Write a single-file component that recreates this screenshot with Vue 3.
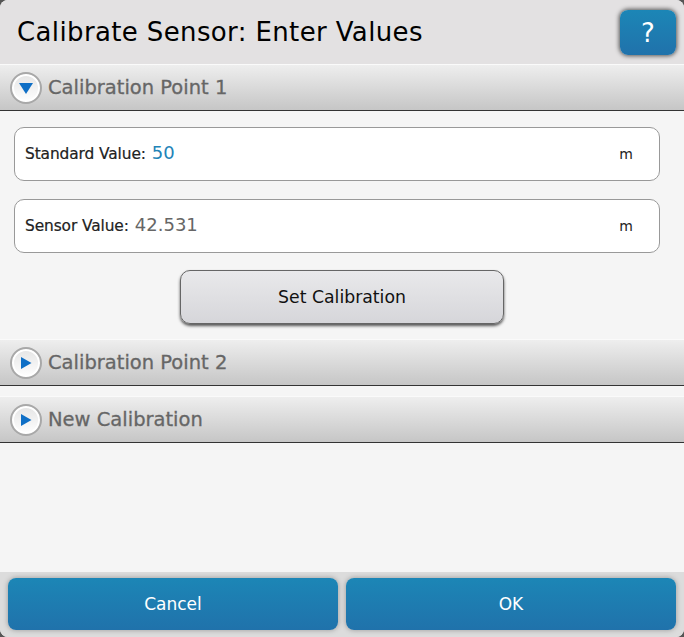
<template>
  <div class="dialog">
    <header class="title-bar">
      <h1 class="title">Calibrate Sensor: Enter Values</h1>
      <button class="help-btn">?</button>
    </header>

    <div class="section-head">
      <span class="toggle">
        <svg width="18" height="18" viewBox="0 0 18 18"><path d="M2 4H16L9 15Z" fill="#0f6fc6" /></svg>
      </span>
      <span class="section-name">Calibration Point 1</span>
    </div>

    <div class="section-body">
      <div class="field">
        <span class="field-label">Standard Value:</span>
        <span class="field-value active">50</span>
        <span class="field-unit">m</span>
      </div>
      <div class="field">
        <span class="field-label">Sensor Value:</span>
        <span class="field-value">42.531</span>
        <span class="field-unit">m</span>
      </div>
      <button class="set-btn">Set Calibration</button>
    </div>

    <div class="section-head">
      <span class="toggle">
        <svg width="18" height="18" viewBox="0 0 18 18"><path d="M4 3L14.5 9L4 15Z" fill="#0f6fc6" /></svg>
      </span>
      <span class="section-name">Calibration Point 2</span>
    </div>

    <div class="section-head second">
      <span class="toggle">
        <svg width="18" height="18" viewBox="0 0 18 18"><path d="M4 3L14.5 9L4 15Z" fill="#0f6fc6" /></svg>
      </span>
      <span class="section-name">New Calibration</span>
    </div>

    <div class="spacer"></div>

    <footer class="actions">
      <button class="action-btn">Cancel</button>
      <button class="action-btn">OK</button>
    </footer>
  </div>
</template>

<script setup>
</script>

<style>
html, body {
  margin: 0;
  background: #555;
}
</style>

<style scoped>
.dialog {
  width: 684px;
  height: 637px;
  display: flex;
  flex-direction: column;
  background: #f5f5f5;
  border-radius: 8px;
  overflow: hidden;
  font-family: "DejaVu Sans", sans-serif;
}

.title-bar {
  height: 64px;
  flex: none;
  display: flex;
  align-items: center;
  justify-content: space-between;
  padding: 0 8px 0 17px;
  background: #e3e1e2;
  box-sizing: border-box;
}

.title {
  margin: 0;
  font-size: 26px;
  font-weight: 400;
  color: #000;
  letter-spacing: 0.37px;
}

.help-btn {
  width: 56px;
  height: 45px;
  margin-top: 1px;
  border: none;
  border-radius: 8px;
  background: linear-gradient(#1c86b6, #2072ab);
  box-shadow: 0 0 4px 1px #555;
  color: #fff;
  font-family: inherit;
  font-size: 26px;
  padding: 0;
}

.section-head {
  height: 47px;
  flex: none;
  display: flex;
  align-items: center;
  gap: 6px;
  padding-left: 10px;
  box-sizing: border-box;
  border-top: 1px solid #fafafa;
  border-bottom: 1px solid #333;
  background: linear-gradient(#eeeeee, #c6c6c6);
}

.section-head.second {
  margin-top: 10px;
}

.toggle {
  width: 32px;
  height: 32px;
  box-sizing: border-box;
  border: 2px solid #a8a8a8;
  border-radius: 50%;
  background: linear-gradient(#e4e4e4, #fff);
  box-shadow: inset 0 0 0 2px #fff;
  display: flex;
  align-items: center;
  justify-content: center;
}

.section-name {
  font-size: 19.5px;
  font-weight: 500;
  color: #666;
  -webkit-text-stroke: 0.3px #666;
}

.section-body {
  padding: 16px 24px 15px 14px;
  display: flex;
  flex-direction: column;
  gap: 18px;
}

.field {
  height: 54px;
  display: flex;
  align-items: center;
  box-sizing: border-box;
  padding: 0 26px 0 10px;
  background: #fff;
  border: 1px solid #999;
  border-radius: 10px;
}

.field-label {
  margin-bottom: 1px;
  font-size: 15.4px;
  color: #222;
  letter-spacing: -0.1px;
  -webkit-text-stroke: 0.2px #222;
}

.field-value {
  margin: 0 0 3px 6px;
  font-size: 18px;
  color: #666;
}

.field-value.active {
  color: #2284b8;
}

.field-unit {
  margin: 0 0 1px auto;
  font-size: 14px;
  color: #222;
}

.set-btn {
  align-self: center;
  width: 324px;
  height: 54px;
  margin: -1px 0 0 10px;
  border: 1px solid #666;
  border-radius: 10px;
  background: linear-gradient(#e9e9eb, #d6d6da);
  box-shadow: 0 2px 3px #555;
  color: #111;
  font-family: inherit;
  font-size: 17.3px;
}

.spacer {
  flex: 1;
}

.actions {
  height: 65px;
  flex: none;
  display: flex;
  gap: 8px;
  padding: 6px 8px 7px;
  box-sizing: border-box;
  background: #dcdcdc;
}

.action-btn {
  flex: 1;
  border: none;
  border-radius: 8px;
  background: linear-gradient(#1c86b6, #2072ab);
  box-shadow: 0 0 4px 1px #aaa;
  color: #fff;
  font-family: inherit;
  font-size: 17px;
}
</style>
